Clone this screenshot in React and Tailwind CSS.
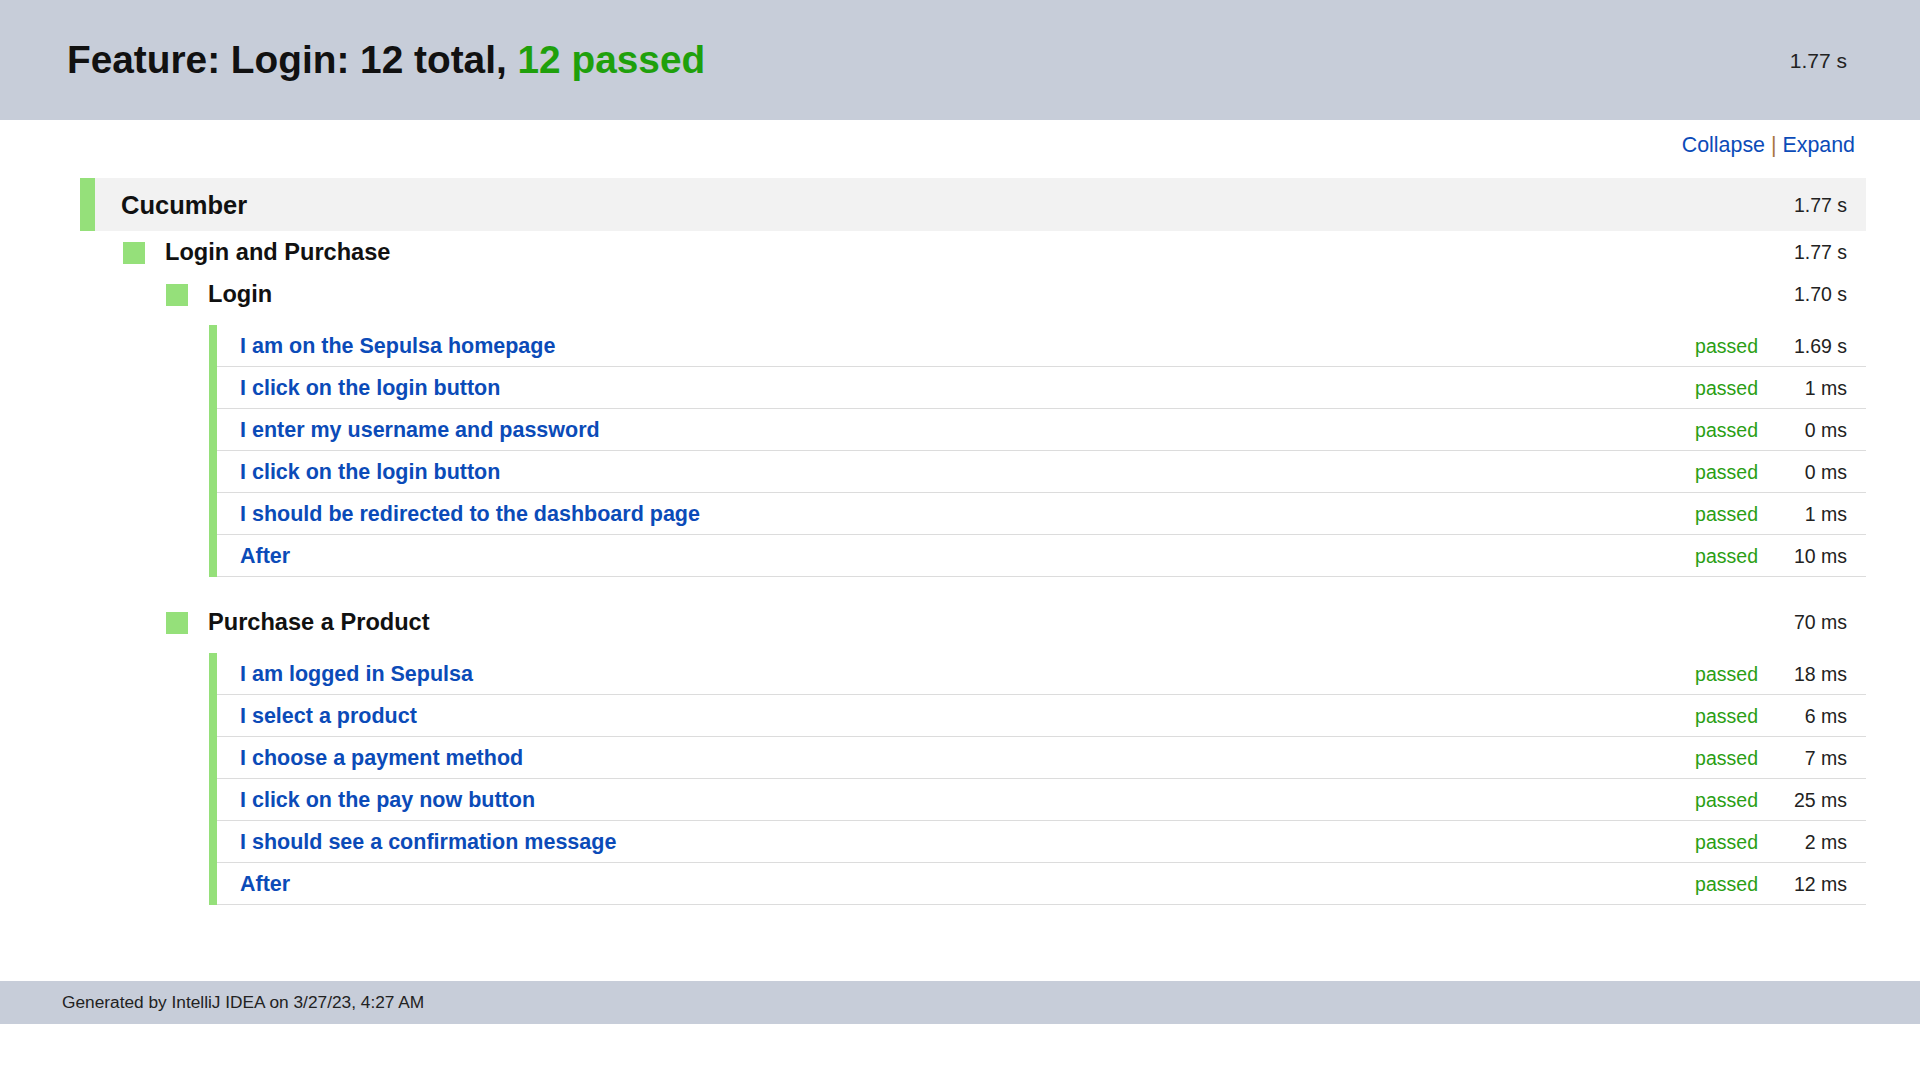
const loginSteps = [
  { name: "I am on the Sepulsa homepage", time: "1.69 s" },
  { name: "I click on the login button", time: "1 ms" },
  { name: "I enter my username and password", time: "0 ms" },
  { name: "I click on the login button", time: "0 ms" },
  { name: "I should be redirected to the dashboard page", time: "1 ms" },
  { name: "After", time: "10 ms" },
];

const purchaseSteps = [
  { name: "I am logged in Sepulsa", time: "18 ms" },
  { name: "I select a product", time: "6 ms" },
  { name: "I choose a payment method", time: "7 ms" },
  { name: "I click on the pay now button", time: "25 ms" },
  { name: "I should see a confirmation message", time: "2 ms" },
  { name: "After", time: "12 ms" },
];

function StepRow({ step }) {
  return (
    <div className="flex h-[42px]">
      <div className="w-[8px] bg-[#95e07a] shrink-0"></div>
      <div className="flex-1 flex items-center justify-between border-b border-[#dcdcdc] pl-[23px] pr-[19px] pt-[2px]">
        <a href="#" className="text-[21.5px] font-bold text-[#0b4bb8]">{step.name}</a>
        <div className="flex items-center text-[19.5px]">
          <span className="text-[#2a9e14]">passed</span>
          <span className="w-[89px] text-right text-[#222]">{step.time}</span>
        </div>
      </div>
    </div>
  );
}

function Suite({ title, time, steps, className }) {
  return (
    <div className={className}>
      <div className="h-[42px] flex items-center justify-between pr-[19px] pt-[2px]">
        <div className="flex items-center">
          <div className="w-[22px] h-[22px] bg-[#95e07a] mr-[20px]"></div>
          <span className="text-[23.6px] font-bold text-[#111]">{title}</span>
        </div>
        <span className="text-[19.5px] text-[#222]">{time}</span>
      </div>
      <div className="mt-[10px] ml-[43px]">
        {steps.map((s, i) => (
          <StepRow key={i} step={s} />
        ))}
      </div>
    </div>
  );
}

export default function App() {
  return (
    <div className="font-['Liberation_Sans',Arial,sans-serif] bg-white min-h-[1080px]">
      {/* Header */}
      <div className="h-[120px] bg-[#c7cdd9] flex items-center justify-between pl-[67px] pr-[73px]">
        <h1 className="text-[38.8px] font-bold text-[#111]">
          Feature: Login: 12 total, <span className="text-[#1fa00c]">12 passed</span>
        </h1>
        <span className="text-[21px] text-[#222] pt-[2px]">1.77 s</span>
      </div>

      <div className="pl-[80px] pr-[54px]">
        <div className="pt-[13px] mb-[21px] pr-[11px] text-right text-[21.4px] leading-[24px]">
          <a href="#" className="text-[#0b4bb8]">Collapse</a>
          <span className="text-[#a8733f]"> | </span>
          <a href="#" className="text-[#0b4bb8]">Expand</a>
        </div>

        {/* Cucumber */}
        <div className="h-[53px] bg-[#f2f2f2] border-l-[15px] border-[#95e07a] flex items-center justify-between pl-[26px] pr-[19px] pt-[2px]">
          <span className="text-[25.5px] font-bold text-[#111]">Cucumber</span>
          <span className="text-[19.5px] text-[#222]">1.77 s</span>
        </div>

        <div className="ml-[43px]">
          <div className="h-[42px] flex items-center justify-between pr-[19px] pt-[2px]">
            <div className="flex items-center">
              <div className="w-[22px] h-[22px] bg-[#95e07a] mr-[20px]"></div>
              <span className="text-[23.6px] font-bold text-[#111]">Login and Purchase</span>
            </div>
            <span className="text-[19.5px] text-[#222]">1.77 s</span>
          </div>

          <div className="ml-[43px]">
            <Suite title="Login" time="1.70 s" steps={loginSteps} />
            <Suite title="Purchase a Product" time="70 ms" steps={purchaseSteps} className="mt-[24px]" />
          </div>
        </div>
      </div>

      {/* Footer */}
      <div className="mt-[76px] h-[43px] bg-[#c7cdd9] flex items-center pl-[62px]">
        <span className="text-[17.3px] text-[#222]">Generated by IntelliJ IDEA on 3/27/23, 4:27 AM</span>
      </div>
    </div>
  );
}
